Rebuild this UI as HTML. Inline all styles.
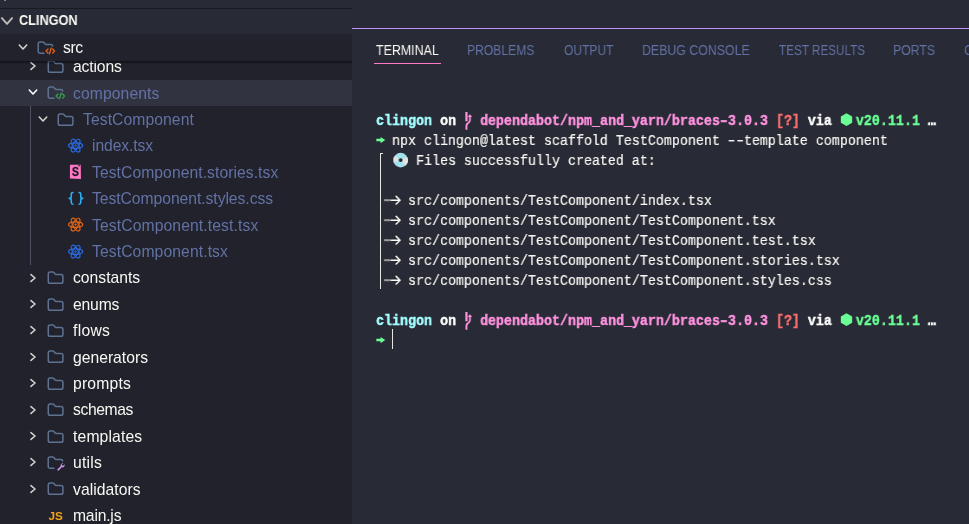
<!DOCTYPE html>
<html lang="en"><head><meta charset="utf-8"><title>clingon</title>
<style>
html,body{margin:0;padding:0;}
body{width:969px;height:524px;overflow:hidden;background:#282a36;position:relative;font-family:"Liberation Sans",sans-serif;}
#side{position:absolute;left:0;top:0;width:352px;height:524px;background:#21222c;overflow:hidden;}
#tree{position:absolute;left:0;top:0;width:352px;height:524px;}
.row{position:absolute;left:0;width:352px;height:26.4px;}
.row.sel{background:#313341;}
.lbl{position:absolute;top:0.800px;height:26.4px;line-height:26.4px;font-size:15.700px;white-space:pre;}
.lbl,.tab,#hdr .t,#term{will-change:transform;}
.fg{color:#f8f8f2;}
.dim{color:#6272a4;}
.chev,.ico{position:absolute;overflow:visible;}
#guide{position:absolute;left:30px;top:106.2px;width:1px;height:158.400px;background:#4f5263;}
#sticky{position:absolute;left:0;top:34.400px;width:352px;height:26.400px;background:#21222c;}
#shadow{position:absolute;left:0;top:60.800px;width:352px;height:3.200px;background:linear-gradient(to bottom,rgba(0,0,0,0.46) 0%,rgba(0,0,0,0.28) 50%,rgba(0,0,0,0) 100%);}
#hdr{position:absolute;left:0;top:0;width:352px;height:34.400px;background:#282a36;}
#hdrline{position:absolute;left:0;top:8px;width:352px;height:1px;background:#191a21;}
#hdr .t{position:absolute;left:19.400px;top:8.400px;height:26px;line-height:25px;font-weight:bold;font-size:13.900px;transform:scaleX(0.915);transform-origin:0 50%;color:#f8f8f2;}
#stub{position:absolute;left:4px;top:0;width:2px;height:1px;background:linear-gradient(to right,#6c6d73,#9c9c99);}
#panel{position:absolute;left:352px;top:28px;width:617px;height:496px;background:#282a36;border-top:1px solid #bd93f9;box-sizing:border-box;overflow:hidden;}
.tab{position:absolute;top:12.250px;height:18px;line-height:18px;font-size:14.600px;transform-origin:0 50%;color:#6272a4;white-space:pre;}
.tab.act{color:#f8f8f2;}
#tabline{position:absolute;left:22px;top:34px;width:67px;height:1px;background:#ff79c6;}
#term{position:absolute;left:24px;top:82px;font-family:"Liberation Mono","DejaVu Sans Mono",monospace;font-size:15.400px;line-height:20px;color:#f8f8f2;transform:scaleX(0.8658);transform-origin:0 0;}
#term div{height:20px;position:relative;white-space:pre;}
#term div{-webkit-text-stroke:0.200px currentColor;}
#term b{font-weight:bold;color:#fff;-webkit-text-stroke:0.450px currentColor;}
#term b.cy{color:#a4ffff;}#term b.pk{color:#ff92df;}#term b.gr{color:#69ff94;}#term b.rd{color:#ff6e6e;}
.cy{color:#a4ffff;}.pk{color:#ff92df;}.gr{color:#69ff94;}.rd{color:#ff6e6e;}
.hy{display:inline-block;transform:scaleX(1.450);}
.c1{display:inline-block;width:0.6em;height:20px;vertical-align:top;position:relative;}
.c2{display:inline-block;width:1.2em;height:20px;vertical-align:top;position:relative;}
.c1 svg,.c2 svg{position:absolute;left:0;top:0;overflow:visible;transform:scaleX(1.155);transform-origin:0 0;}
#vbar{display:block;position:absolute;left:28px;top:124px;width:1.200px;height:136px;background:#e9e9e4;}
#vhook{display:block;position:absolute;left:28px;top:124px;width:3px;height:1px;background:#e9e9e4;}
#cursor{display:block;position:absolute;left:40px;top:300px;width:1px;height:20px;background:#e6e6e0;}
</style></head><body>

<div id="side"><div id="tree">
<div class="row" style="top:53.400px"><svg class="chev" style="left:25.1px;top:5.1px" width="16" height="16" viewBox="-8 -8 16 16"><path d="M-2.05 -3.45 2.05 0 -2.05 3.45" fill="none" stroke="#d2d2cd" stroke-width="1.55" stroke-linecap="round" stroke-linejoin="round"/></svg><svg class="ico" style="left:46.0px;top:3.6px" width="19.200" height="19.200" viewBox="0 0 16 16"><path d="M1.900 4.800A1.500 1.500 0 0 1 3.400 3.300h2.200a1 1 0 0 1 .750.330L7.600 5.070a1 1 0 0 0 .750.330h4.250A1.500 1.500 0 0 1 14.100 6.900v4.300a1.500 1.500 0 0 1-1.500 1.500H3.400a1.500 1.500 0 0 1-1.500-1.500z" fill="none" stroke="#5f7291" stroke-width="1.250"/></svg><span class="lbl fg" style="left:73px;letter-spacing:-0.15px">actions</span></div>
<div class="row sel" style="top:79.8px"><svg class="chev" style="left:24.9px;top:4.6px" width="16" height="16" viewBox="-8 -8 16 16"><path d="M-3.75 -2.05 0 2.05 3.75 -2.05" fill="none" stroke="#ffffff" stroke-width="1.55" stroke-linecap="round" stroke-linejoin="round"/></svg><svg class="ico" style="left:46.0px;top:3.6px" width="19.200" height="19.200" viewBox="0 0 16 16"><path d="M13.900 6.700A1.400 1.400 0 0 0 12.500 5.400H8.350a1 1 0 0 1-.750-.330L6.350 3.630A1 1 0 0 0 5.600 3.300H3.350A1.500 1.500 0 0 0 1.850 4.800v6.400A1.500 1.500 0 0 0 3.350 12.700h3.300" fill="none" stroke="#5f7291" stroke-width="1.250" stroke-linecap="round"/><g fill="none" stroke="#3a9c51" stroke-width="1.150" stroke-linecap="round" stroke-linejoin="round"><path d="M10 9.100 8.400 10.800l1.600 1.700"/><path d="M13.900 9.100 15.500 10.800l-1.600 1.700"/><path d="M12.700 8.400 11.200 13.200"/></g></svg><span class="lbl dim" style="left:73px;letter-spacing:0.1px">components</span></div>
<div class="row" style="top:106.2px"><svg class="chev" style="left:34.9px;top:4.6px" width="16" height="16" viewBox="-8 -8 16 16"><path d="M-3.75 -2.05 0 2.05 3.75 -2.05" fill="none" stroke="#d2d2cd" stroke-width="1.55" stroke-linecap="round" stroke-linejoin="round"/></svg><svg class="ico" style="left:56.0px;top:3.6px" width="19.200" height="19.200" viewBox="0 0 16 16"><path d="M1.900 4.800A1.500 1.500 0 0 1 3.400 3.300h2.200a1 1 0 0 1 .750.330L7.600 5.070a1 1 0 0 0 .750.330h4.250A1.500 1.500 0 0 1 14.100 6.900v4.300a1.500 1.500 0 0 1-1.500 1.500H3.400a1.500 1.500 0 0 1-1.500-1.500z" fill="none" stroke="#5f7291" stroke-width="1.250"/></svg><span class="lbl dim" style="left:82.5px;letter-spacing:0.08px">TestComponent</span></div>
<div class="row" style="top:132.6px"><svg class="ico" style="left:65.5px;top:3.6px" width="19.200" height="19.200" viewBox="0 0 16 16"><g fill="none" stroke="#2a68dc" stroke-width="1.100"><ellipse cx="8" cy="8" rx="5.900" ry="2.300"/><ellipse cx="8" cy="8" rx="5.900" ry="2.300" transform="rotate(60 8 8)"/><ellipse cx="8" cy="8" rx="5.900" ry="2.300" transform="rotate(120 8 8)"/><path d="M8 6.800 9.200 8 8 9.200 6.800 8z" fill="#2a68dc" stroke="none"/></g></svg><span class="lbl dim" style="left:92px;letter-spacing:-0.1px">index.tsx</span></div>
<div class="row" style="top:159.0px"><svg class="ico" style="left:65.5px;top:3.6px" width="19.200" height="19.200" viewBox="0 0 16 16"><path d="M3.300 1.550h9l.150 11.700-9.200-.250z" fill="#ff79c6"/><path d="M10.300 1.550v1.500l.600-.450.600.450V1.550z" fill="#21222c"/><text transform="translate(7.800 11.100) scale(0.840 1)" x="0" y="0" text-anchor="middle" font-family="Liberation Sans, sans-serif" font-weight="bold" font-size="10.300" fill="#191a21" stroke="#191a21" stroke-width="0.300">S</text></svg><span class="lbl dim" style="left:92px;letter-spacing:0.06px">TestComponent.stories.tsx</span></div>
<div class="row" style="top:185.4px"><svg class="ico" style="left:65.5px;top:3.6px" width="19.200" height="19.200" viewBox="0 0 16 16"><g fill="none" stroke="#2badf5" stroke-width="1.350" stroke-linecap="round" stroke-linejoin="round"><path d="M5.800 2.900Q4.400 2.900 4.400 4.300V6.500Q4.400 7.700 2.700 7.800 4.400 7.900 4.400 9.100V11.300Q4.400 12.700 5.800 12.700"/><path d="M10.900 2.900Q12.300 2.900 12.300 4.300V6.500Q12.300 7.700 14 7.800 12.300 7.900 12.300 9.100V11.300Q12.300 12.700 10.900 12.700"/></g></svg><span class="lbl dim" style="left:92px;letter-spacing:-0.05px">TestComponent.styles.css</span></div>
<div class="row" style="top:211.8px"><svg class="ico" style="left:65.5px;top:3.6px" width="19.200" height="19.200" viewBox="0 0 16 16"><g fill="none" stroke="#de6314" stroke-width="1.100"><ellipse cx="8" cy="8" rx="5.900" ry="2.300"/><ellipse cx="8" cy="8" rx="5.900" ry="2.300" transform="rotate(60 8 8)"/><ellipse cx="8" cy="8" rx="5.900" ry="2.300" transform="rotate(120 8 8)"/><path d="M8 6.800 9.200 8 8 9.200 6.800 8z" fill="#de6314" stroke="none"/></g></svg><span class="lbl dim" style="left:92px;letter-spacing:0.11px">TestComponent.test.tsx</span></div>
<div class="row" style="top:238.2px"><svg class="ico" style="left:65.5px;top:3.6px" width="19.200" height="19.200" viewBox="0 0 16 16"><g fill="none" stroke="#2a68dc" stroke-width="1.100"><ellipse cx="8" cy="8" rx="5.900" ry="2.300"/><ellipse cx="8" cy="8" rx="5.900" ry="2.300" transform="rotate(60 8 8)"/><ellipse cx="8" cy="8" rx="5.900" ry="2.300" transform="rotate(120 8 8)"/><path d="M8 6.800 9.200 8 8 9.200 6.800 8z" fill="#2a68dc" stroke="none"/></g></svg><span class="lbl dim" style="left:92px;letter-spacing:0.1px">TestComponent.tsx</span></div>
<div class="row" style="top:264.6px"><svg class="chev" style="left:25.1px;top:5.1px" width="16" height="16" viewBox="-8 -8 16 16"><path d="M-2.05 -3.45 2.05 0 -2.05 3.45" fill="none" stroke="#d2d2cd" stroke-width="1.55" stroke-linecap="round" stroke-linejoin="round"/></svg><svg class="ico" style="left:46.0px;top:3.6px" width="19.200" height="19.200" viewBox="0 0 16 16"><path d="M1.900 4.800A1.500 1.500 0 0 1 3.400 3.300h2.200a1 1 0 0 1 .750.330L7.600 5.070a1 1 0 0 0 .750.330h4.250A1.500 1.500 0 0 1 14.100 6.900v4.300a1.500 1.500 0 0 1-1.500 1.500H3.400a1.500 1.500 0 0 1-1.500-1.500z" fill="none" stroke="#5f7291" stroke-width="1.250"/></svg><span class="lbl fg" style="left:73px">constants</span></div>
<div class="row" style="top:291.0px"><svg class="chev" style="left:25.1px;top:5.1px" width="16" height="16" viewBox="-8 -8 16 16"><path d="M-2.05 -3.45 2.05 0 -2.05 3.45" fill="none" stroke="#d2d2cd" stroke-width="1.55" stroke-linecap="round" stroke-linejoin="round"/></svg><svg class="ico" style="left:46.0px;top:3.6px" width="19.200" height="19.200" viewBox="0 0 16 16"><path d="M1.900 4.800A1.500 1.500 0 0 1 3.400 3.300h2.200a1 1 0 0 1 .750.330L7.600 5.070a1 1 0 0 0 .750.330h4.250A1.500 1.500 0 0 1 14.100 6.900v4.300a1.500 1.500 0 0 1-1.500 1.500H3.400a1.500 1.500 0 0 1-1.500-1.500z" fill="none" stroke="#5f7291" stroke-width="1.250"/></svg><span class="lbl fg" style="left:73px;letter-spacing:-0.18px">enums</span></div>
<div class="row" style="top:317.4px"><svg class="chev" style="left:25.1px;top:5.1px" width="16" height="16" viewBox="-8 -8 16 16"><path d="M-2.05 -3.45 2.05 0 -2.05 3.45" fill="none" stroke="#d2d2cd" stroke-width="1.55" stroke-linecap="round" stroke-linejoin="round"/></svg><svg class="ico" style="left:46.0px;top:3.6px" width="19.200" height="19.200" viewBox="0 0 16 16"><path d="M1.900 4.800A1.500 1.500 0 0 1 3.400 3.300h2.200a1 1 0 0 1 .750.330L7.600 5.070a1 1 0 0 0 .750.330h4.250A1.500 1.500 0 0 1 14.100 6.900v4.300a1.500 1.500 0 0 1-1.500 1.500H3.400a1.500 1.500 0 0 1-1.500-1.500z" fill="none" stroke="#5f7291" stroke-width="1.250"/></svg><span class="lbl fg" style="left:73px;letter-spacing:0.28px">flows</span></div>
<div class="row" style="top:343.8px"><svg class="chev" style="left:25.1px;top:5.1px" width="16" height="16" viewBox="-8 -8 16 16"><path d="M-2.05 -3.45 2.05 0 -2.05 3.45" fill="none" stroke="#d2d2cd" stroke-width="1.55" stroke-linecap="round" stroke-linejoin="round"/></svg><svg class="ico" style="left:46.0px;top:3.6px" width="19.200" height="19.200" viewBox="0 0 16 16"><path d="M1.900 4.800A1.500 1.500 0 0 1 3.400 3.300h2.200a1 1 0 0 1 .750.330L7.600 5.070a1 1 0 0 0 .750.330h4.250A1.500 1.500 0 0 1 14.100 6.900v4.300a1.500 1.500 0 0 1-1.500 1.500H3.400a1.500 1.500 0 0 1-1.500-1.500z" fill="none" stroke="#5f7291" stroke-width="1.250"/></svg><span class="lbl fg" style="left:73px">generators</span></div>
<div class="row" style="top:370.2px"><svg class="chev" style="left:25.1px;top:5.1px" width="16" height="16" viewBox="-8 -8 16 16"><path d="M-2.05 -3.45 2.05 0 -2.05 3.45" fill="none" stroke="#d2d2cd" stroke-width="1.55" stroke-linecap="round" stroke-linejoin="round"/></svg><svg class="ico" style="left:46.0px;top:3.6px" width="19.200" height="19.200" viewBox="0 0 16 16"><path d="M1.900 4.800A1.500 1.500 0 0 1 3.400 3.300h2.200a1 1 0 0 1 .750.330L7.600 5.070a1 1 0 0 0 .750.330h4.250A1.500 1.500 0 0 1 14.100 6.900v4.300a1.500 1.500 0 0 1-1.500 1.500H3.400a1.500 1.500 0 0 1-1.500-1.500z" fill="none" stroke="#5f7291" stroke-width="1.250"/></svg><span class="lbl fg" style="left:73px;letter-spacing:0.2px">prompts</span></div>
<div class="row" style="top:396.6px"><svg class="chev" style="left:25.1px;top:5.1px" width="16" height="16" viewBox="-8 -8 16 16"><path d="M-2.05 -3.45 2.05 0 -2.05 3.45" fill="none" stroke="#d2d2cd" stroke-width="1.55" stroke-linecap="round" stroke-linejoin="round"/></svg><svg class="ico" style="left:46.0px;top:3.6px" width="19.200" height="19.200" viewBox="0 0 16 16"><path d="M1.900 4.800A1.500 1.500 0 0 1 3.400 3.300h2.200a1 1 0 0 1 .750.330L7.600 5.070a1 1 0 0 0 .750.330h4.250A1.500 1.500 0 0 1 14.100 6.900v4.300a1.500 1.500 0 0 1-1.500 1.500H3.400a1.500 1.500 0 0 1-1.500-1.500z" fill="none" stroke="#5f7291" stroke-width="1.250"/></svg><span class="lbl fg" style="left:73px;letter-spacing:-0.4px">schemas</span></div>
<div class="row" style="top:423.0px"><svg class="chev" style="left:25.1px;top:5.1px" width="16" height="16" viewBox="-8 -8 16 16"><path d="M-2.05 -3.45 2.05 0 -2.05 3.45" fill="none" stroke="#d2d2cd" stroke-width="1.55" stroke-linecap="round" stroke-linejoin="round"/></svg><svg class="ico" style="left:46.0px;top:3.6px" width="19.200" height="19.200" viewBox="0 0 16 16"><path d="M1.900 4.800A1.500 1.500 0 0 1 3.400 3.300h2.200a1 1 0 0 1 .750.330L7.600 5.070a1 1 0 0 0 .750.330h4.250A1.500 1.500 0 0 1 14.100 6.900v4.300a1.500 1.500 0 0 1-1.500 1.500H3.400a1.500 1.500 0 0 1-1.500-1.500z" fill="none" stroke="#5f7291" stroke-width="1.250"/></svg><span class="lbl fg" style="left:73px;letter-spacing:0.15px">templates</span></div>
<div class="row" style="top:449.4px"><svg class="chev" style="left:25.1px;top:5.1px" width="16" height="16" viewBox="-8 -8 16 16"><path d="M-2.05 -3.45 2.05 0 -2.05 3.45" fill="none" stroke="#d2d2cd" stroke-width="1.55" stroke-linecap="round" stroke-linejoin="round"/></svg><svg class="ico" style="left:46.0px;top:3.6px" width="19.200" height="19.200" viewBox="0 0 16 16"><path d="M13.900 6.700A1.400 1.400 0 0 0 12.500 5.400H8.350a1 1 0 0 1-.750-.330L6.350 3.630A1 1 0 0 0 5.600 3.300H3.350A1.500 1.500 0 0 0 1.850 4.800v6.400A1.500 1.500 0 0 0 3.350 12.700h3.300" fill="none" stroke="#5f7291" stroke-width="1.250" stroke-linecap="round"/><path d="M14.700 8.700a1.900 1.900 0 0 0-2.500 2.300L9.600 13.500a.750.750 0 0 0 1.050 1.050l2.500-2.600a1.900 1.900 0 0 0 2.300-2.500l-1.200 1.200-.900-.3-.3-.900z" fill="#c994e8"/></svg><span class="lbl fg" style="left:73px;letter-spacing:0.24px">utils</span></div>
<div class="row" style="top:475.8px"><svg class="chev" style="left:25.1px;top:5.1px" width="16" height="16" viewBox="-8 -8 16 16"><path d="M-2.05 -3.45 2.05 0 -2.05 3.45" fill="none" stroke="#d2d2cd" stroke-width="1.55" stroke-linecap="round" stroke-linejoin="round"/></svg><svg class="ico" style="left:46.0px;top:3.6px" width="19.200" height="19.200" viewBox="0 0 16 16"><path d="M1.900 4.800A1.500 1.500 0 0 1 3.400 3.300h2.200a1 1 0 0 1 .750.330L7.600 5.070a1 1 0 0 0 .750.330h4.250A1.500 1.500 0 0 1 14.100 6.900v4.300a1.500 1.500 0 0 1-1.500 1.500H3.400a1.500 1.500 0 0 1-1.500-1.500z" fill="none" stroke="#5f7291" stroke-width="1.250"/></svg><span class="lbl fg" style="left:73px;letter-spacing:0.04px">validators</span></div>
<div class="row" style="top:502.2px"><svg class="ico" style="left:46.0px;top:3.6px" width="19.200" height="19.200" viewBox="0 0 16 16"><text x="8" y="12" text-anchor="middle" font-family="Liberation Sans, sans-serif" font-weight="bold" font-size="9.800" fill="#f5a21b">JS</text></svg><span class="lbl fg" style="left:73px;letter-spacing:-0.2px">main.js</span></div>
<div id="guide"></div>
</div>
<div id="sticky"><svg class="chev" style="left:15.3px;top:5.0px" width="16" height="16" viewBox="-8 -8 16 16"><path d="M-3.75 -2.05 0 2.05 3.75 -2.05" fill="none" stroke="#d2d2cd" stroke-width="1.55" stroke-linecap="round" stroke-linejoin="round"/></svg><svg class="ico" style="left:36.0px;top:3.4px" width="19.200" height="19.200" viewBox="0 0 16 16"><path d="M13.900 6.700A1.400 1.400 0 0 0 12.500 5.400H8.350a1 1 0 0 1-.750-.330L6.350 3.630A1 1 0 0 0 5.600 3.300H3.350A1.500 1.500 0 0 0 1.850 4.800v6.400A1.500 1.500 0 0 0 3.350 12.700h3.300" fill="none" stroke="#5f7291" stroke-width="1.250" stroke-linecap="round"/><g fill="none" stroke="#e2601a" stroke-width="1.150" stroke-linecap="round" stroke-linejoin="round"><path d="M10 9.100 8.400 10.800l1.600 1.700"/><path d="M13.900 9.100 15.500 10.800l-1.600 1.700"/><path d="M12.700 8.400 11.200 13.200"/></g></svg><span class="lbl fg" style="left:63px;letter-spacing:-0.4px">src</span></div>
<div id="shadow"></div>
<div id="hdr"><div id="stub"></div><div id="hdrline"></div><svg class="chev" style="left:-0.7px;top:13.2px" width="16" height="16" viewBox="-8 -8 16 16"><path d="M-5.1 -2.9 0 2.9 5.1 -2.9" fill="none" stroke="#bdbdb9" stroke-width="1.9" stroke-linecap="round" stroke-linejoin="round"/></svg><span class="t">CLINGON</span></div>
</div>

<div id="panel">
<span class="tab act" style="left:24px;transform:scaleX(0.85)">TERMINAL</span>
<span class="tab" style="left:115.2px;transform:scaleX(0.831)">PROBLEMS</span>
<span class="tab" style="left:212px;transform:scaleX(0.826)">OUTPUT</span>
<span class="tab" style="left:290px;transform:scaleX(0.846)">DEBUG CONSOLE</span>
<span class="tab" style="left:426.6px;transform:scaleX(0.802)">TEST RESULTS</span>
<span class="tab" style="left:540.8px;transform:scaleX(0.842)">PORTS</span>
<span class="tab" style="left:611.5px;transform:scaleX(0.84)">GITLENS</span>
<div id="tabline"></div>
<div id="term">
<div><b class="cy">clingon</b> <b>on</b> <span class="c1"><svg width="8" height="20" viewBox="0 0 8 20"><g fill="none" stroke="#ff92df" stroke-linecap="butt" stroke-linejoin="round"><path d="M2.100 1v9.300" stroke-width="2.100"/><path d="M2.100 18.700v-4.300c0-2.300 3.500-2.600 3.500-5.100V5.500" stroke-width="1.800"/></g><path d="M5.600 2.900 7.800 6.100H3.400z" fill="#ff92df"/></svg></span> <b class="pk">dependabot/npm_and_yarn/braces<span class="hy">-</span>3.0.3</b> <b class="rd">[?]</b> <b>via</b> <span class="c1"><svg width="8" height="20" viewBox="0 0 8 20"><path d="M6.400 2.200 12.100 5.400v6.400L6.400 15 .700 11.800V5.400z" fill="#69ff94"/></svg></span> <b class="gr">v20.11.1</b> <b>…</b></div>
<div><span class="c1 gr"><svg width="8" height="20" viewBox="0 0 8 20"><path d="M0.300 7.850h4.300V6l4.600 3.100-4.600 3.100v-1.850H0.300z" fill="#69ff94"/></svg></span> npx clingon@latest scaffold TestComponent <span class="hy">-</span><span class="hy">-</span>template component</div>
<div>  <span class="c2"><svg width="16" height="20" viewBox="0 0 16 20"><circle cx="9.05" cy="9.1" r="7.35" fill="#a2e2ec"/><path d="M2.14 11.61A7.35 7.35 0 0 1 3.03 4.88L6.92 7.61A2.6 2.6 0 0 0 6.61 9.99zM15.71 5.99A7.35 7.35 0 0 1 13.77 14.73L10.72 11.09A2.6 2.6 0 0 0 11.41 8.00z" fill="#e6e3e1"/><circle cx="9.05" cy="9.1" r="1.900" fill="#22232e"/></svg></span> Files successfully created at:</div>
<div></div>
<div> <span class="c2"><svg width="16" height="20" viewBox="0 0 16 20"><path d="M0.200 9.200h6.400" stroke="#9c9c9e" stroke-width="2" fill="none"/><path d="M7.300 9.200h8.600M12.300 5.400l4 3.800-4 3.800" stroke="#f8f8f2" stroke-width="1.500" fill="none" stroke-linecap="round" stroke-linejoin="round"/></svg></span> src/components/TestComponent/index.tsx</div>
<div> <span class="c2"><svg width="16" height="20" viewBox="0 0 16 20"><path d="M0.200 9.200h6.400" stroke="#9c9c9e" stroke-width="2" fill="none"/><path d="M7.300 9.200h8.600M12.300 5.400l4 3.800-4 3.800" stroke="#f8f8f2" stroke-width="1.500" fill="none" stroke-linecap="round" stroke-linejoin="round"/></svg></span> src/components/TestComponent/TestComponent.tsx</div>
<div> <span class="c2"><svg width="16" height="20" viewBox="0 0 16 20"><path d="M0.200 9.200h6.400" stroke="#9c9c9e" stroke-width="2" fill="none"/><path d="M7.300 9.200h8.600M12.300 5.400l4 3.800-4 3.800" stroke="#f8f8f2" stroke-width="1.500" fill="none" stroke-linecap="round" stroke-linejoin="round"/></svg></span> src/components/TestComponent/TestComponent.test.tsx</div>
<div> <span class="c2"><svg width="16" height="20" viewBox="0 0 16 20"><path d="M0.200 9.200h6.400" stroke="#9c9c9e" stroke-width="2" fill="none"/><path d="M7.300 9.200h8.600M12.300 5.400l4 3.800-4 3.800" stroke="#f8f8f2" stroke-width="1.500" fill="none" stroke-linecap="round" stroke-linejoin="round"/></svg></span> src/components/TestComponent/TestComponent.stories.tsx</div>
<div> <span class="c2"><svg width="16" height="20" viewBox="0 0 16 20"><path d="M0.200 9.200h6.400" stroke="#9c9c9e" stroke-width="2" fill="none"/><path d="M7.300 9.200h8.600M12.300 5.400l4 3.800-4 3.800" stroke="#f8f8f2" stroke-width="1.500" fill="none" stroke-linecap="round" stroke-linejoin="round"/></svg></span> src/components/TestComponent/TestComponent.styles.css</div>
<div></div>
<div><b class="cy">clingon</b> <b>on</b> <span class="c1"><svg width="8" height="20" viewBox="0 0 8 20"><g fill="none" stroke="#ff92df" stroke-linecap="butt" stroke-linejoin="round"><path d="M2.100 1v9.300" stroke-width="2.100"/><path d="M2.100 18.700v-4.300c0-2.300 3.500-2.600 3.500-5.100V5.500" stroke-width="1.800"/></g><path d="M5.600 2.900 7.800 6.100H3.400z" fill="#ff92df"/></svg></span> <b class="pk">dependabot/npm_and_yarn/braces<span class="hy">-</span>3.0.3</b> <b class="rd">[?]</b> <b>via</b> <span class="c1"><svg width="8" height="20" viewBox="0 0 8 20"><path d="M6.400 2.200 12.100 5.400v6.400L6.400 15 .700 11.800V5.400z" fill="#69ff94"/></svg></span> <b class="gr">v20.11.1</b> <b>…</b></div>
<div><span class="c1 gr"><svg width="8" height="20" viewBox="0 0 8 20"><path d="M0.300 7.850h4.300V6l4.600 3.100-4.600 3.100v-1.850H0.300z" fill="#69ff94"/></svg></span></div>
</div>
<i id="vbar"></i><i id="vhook"></i><i id="cursor"></i>
</div>
</body></html>
